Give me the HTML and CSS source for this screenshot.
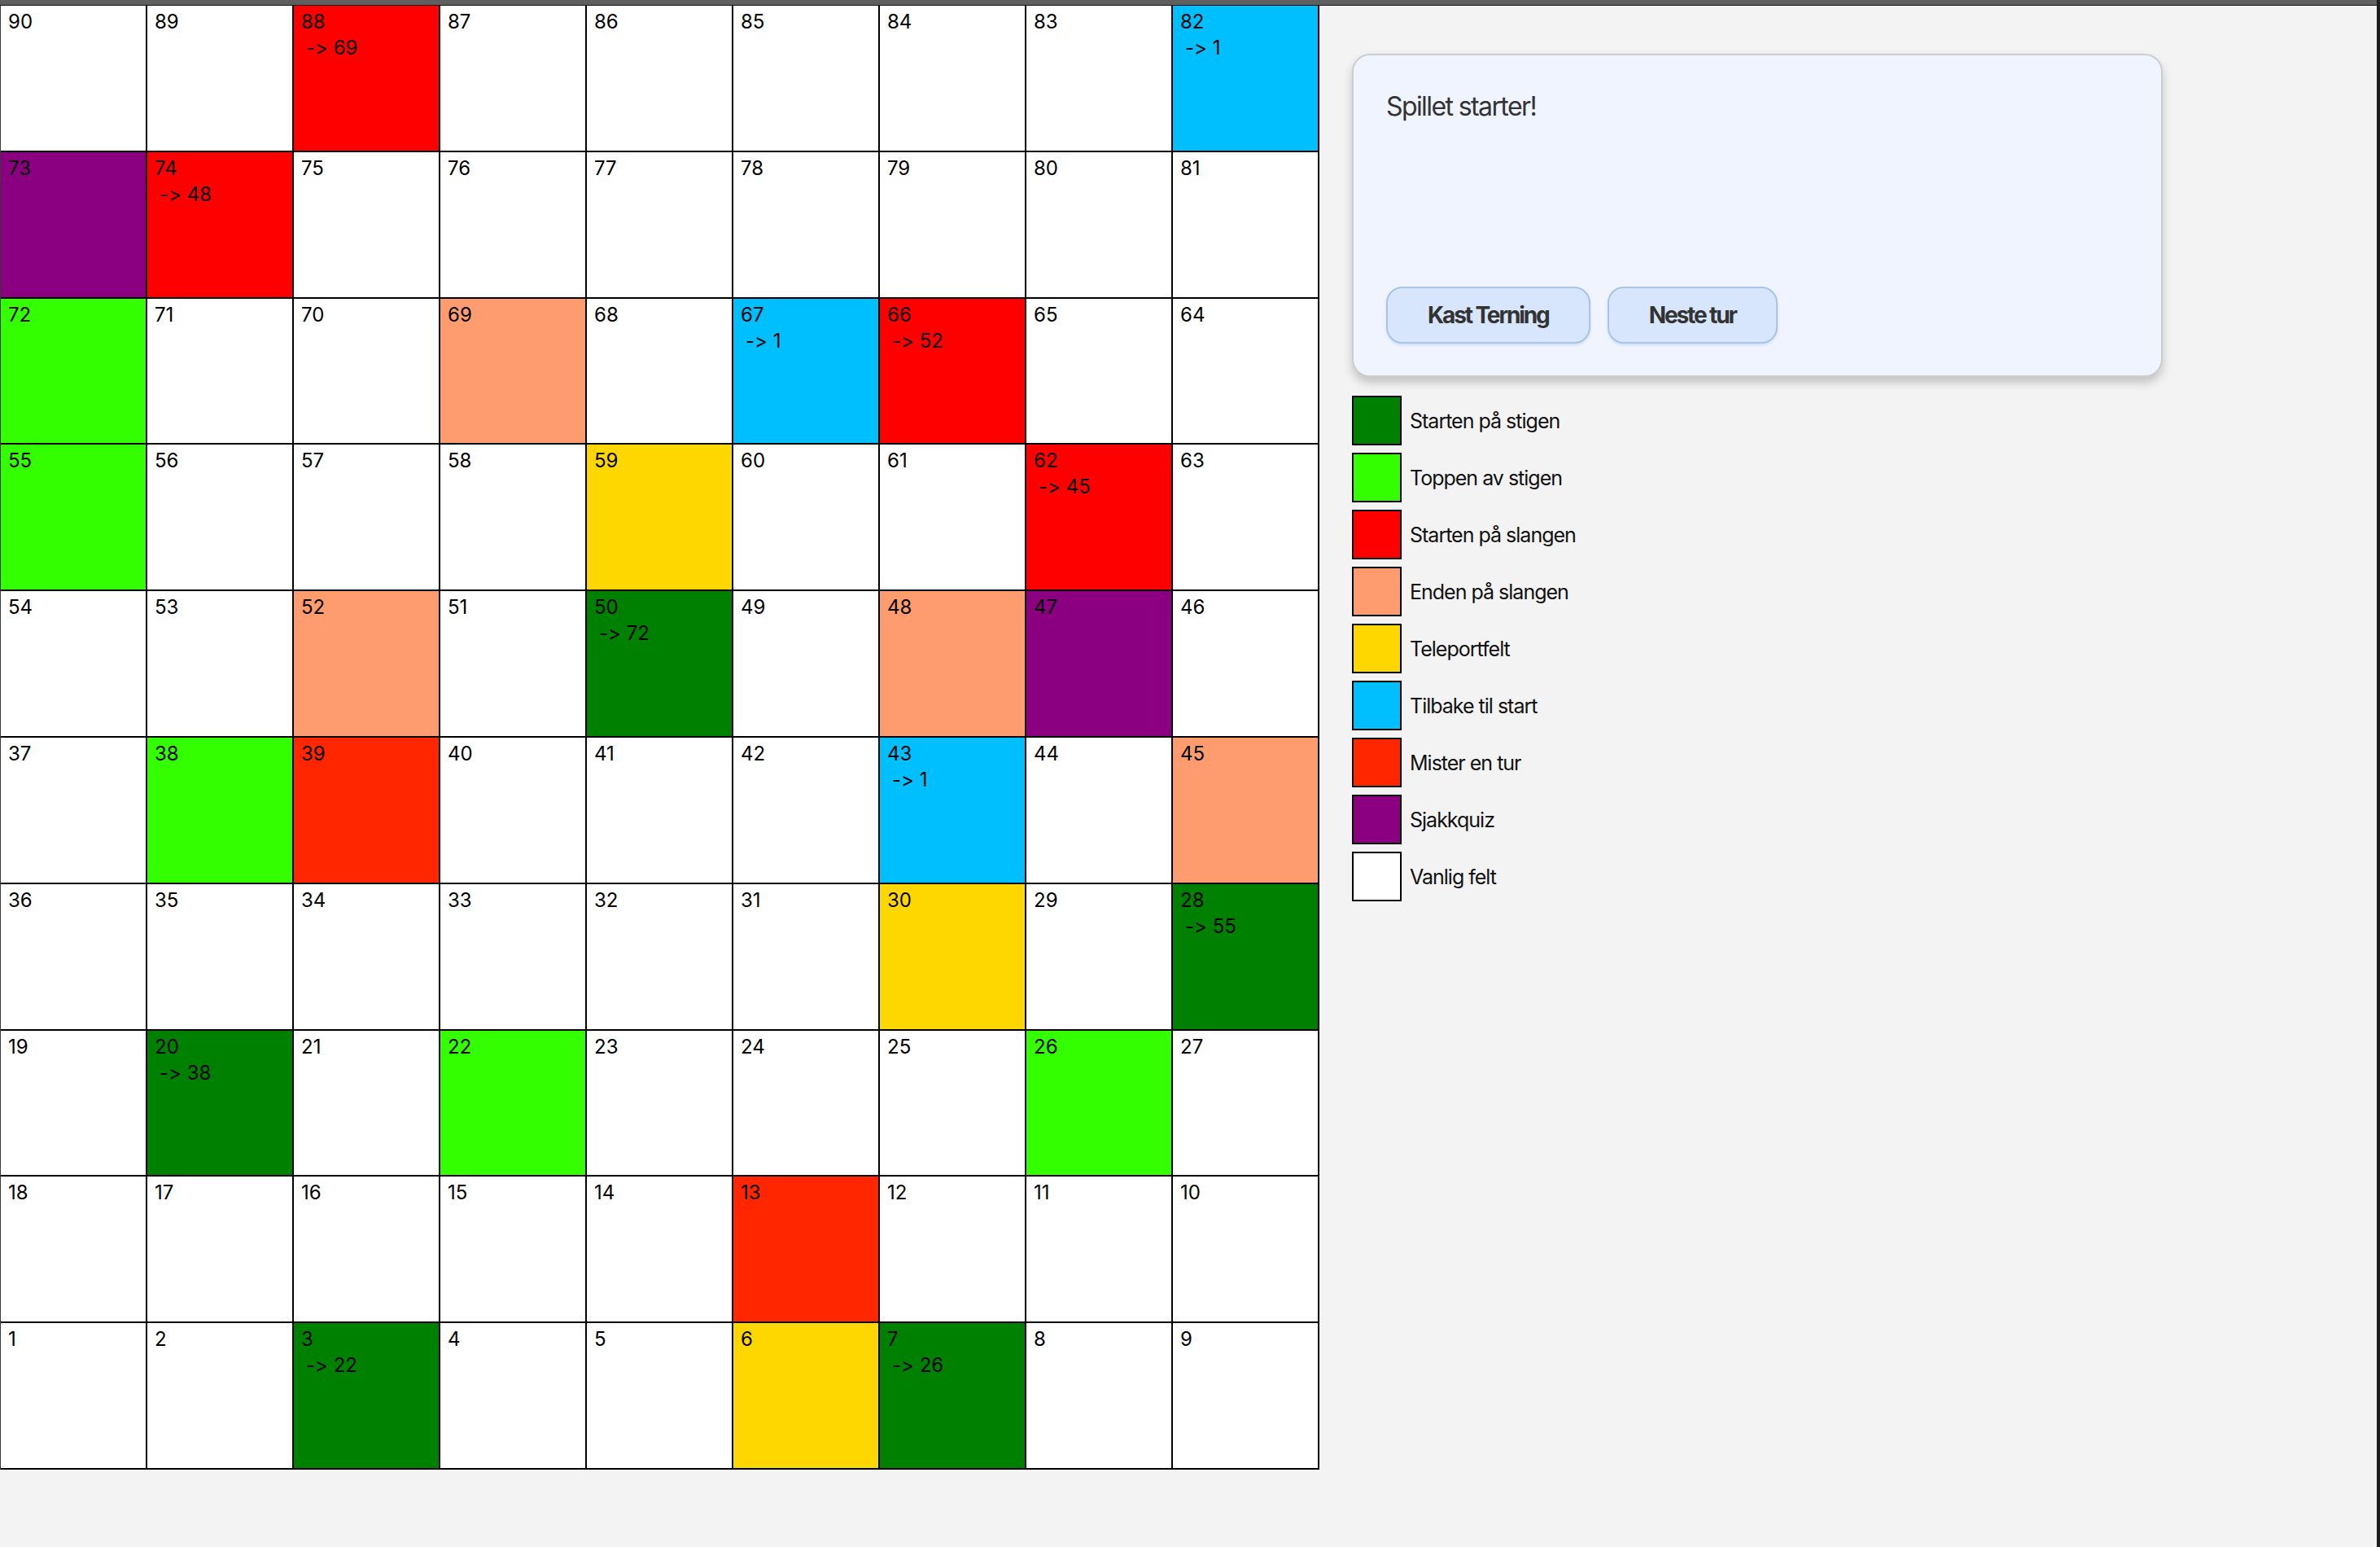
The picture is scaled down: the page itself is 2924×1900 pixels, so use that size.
FILE: index.html
```html
<!DOCTYPE html>
<html lang="no">
<head>
<meta charset="utf-8">
<title>Stigespill</title>
<link rel="stylesheet" href="styles.css">
</head>
<body>
<div class="window">
  <div class="titlebar"></div>
  <main class="app">
    <div class="board">
      <div class="cell">90</div>
      <div class="cell">89</div>
      <div class="cell c-ss">88<span class="to">-&gt; 69</span></div>
      <div class="cell">87</div>
      <div class="cell">86</div>
      <div class="cell">85</div>
      <div class="cell">84</div>
      <div class="cell">83</div>
      <div class="cell c-bs">82<span class="to">-&gt; 1</span></div>

      <div class="cell c-q">73</div>
      <div class="cell c-ss">74<span class="to">-&gt; 48</span></div>
      <div class="cell">75</div>
      <div class="cell">76</div>
      <div class="cell">77</div>
      <div class="cell">78</div>
      <div class="cell">79</div>
      <div class="cell">80</div>
      <div class="cell">81</div>

      <div class="cell c-lt">72</div>
      <div class="cell">71</div>
      <div class="cell">70</div>
      <div class="cell c-se">69</div>
      <div class="cell">68</div>
      <div class="cell c-bs">67<span class="to">-&gt; 1</span></div>
      <div class="cell c-ss">66<span class="to">-&gt; 52</span></div>
      <div class="cell">65</div>
      <div class="cell">64</div>

      <div class="cell c-lt">55</div>
      <div class="cell">56</div>
      <div class="cell">57</div>
      <div class="cell">58</div>
      <div class="cell c-tp">59</div>
      <div class="cell">60</div>
      <div class="cell">61</div>
      <div class="cell c-ss">62<span class="to">-&gt; 45</span></div>
      <div class="cell">63</div>

      <div class="cell">54</div>
      <div class="cell">53</div>
      <div class="cell c-se">52</div>
      <div class="cell">51</div>
      <div class="cell c-ls">50<span class="to">-&gt; 72</span></div>
      <div class="cell">49</div>
      <div class="cell c-se">48</div>
      <div class="cell c-q">47</div>
      <div class="cell">46</div>

      <div class="cell">37</div>
      <div class="cell c-lt">38</div>
      <div class="cell c-mt">39</div>
      <div class="cell">40</div>
      <div class="cell">41</div>
      <div class="cell">42</div>
      <div class="cell c-bs">43<span class="to">-&gt; 1</span></div>
      <div class="cell">44</div>
      <div class="cell c-se">45</div>

      <div class="cell">36</div>
      <div class="cell">35</div>
      <div class="cell">34</div>
      <div class="cell">33</div>
      <div class="cell">32</div>
      <div class="cell">31</div>
      <div class="cell c-tp">30</div>
      <div class="cell">29</div>
      <div class="cell c-ls">28<span class="to">-&gt; 55</span></div>

      <div class="cell">19</div>
      <div class="cell c-ls">20<span class="to">-&gt; 38</span></div>
      <div class="cell">21</div>
      <div class="cell c-lt">22</div>
      <div class="cell">23</div>
      <div class="cell">24</div>
      <div class="cell">25</div>
      <div class="cell c-lt">26</div>
      <div class="cell">27</div>

      <div class="cell">18</div>
      <div class="cell">17</div>
      <div class="cell">16</div>
      <div class="cell">15</div>
      <div class="cell">14</div>
      <div class="cell c-mt">13</div>
      <div class="cell">12</div>
      <div class="cell">11</div>
      <div class="cell">10</div>

      <div class="cell">1</div>
      <div class="cell">2</div>
      <div class="cell c-ls">3<span class="to">-&gt; 22</span></div>
      <div class="cell">4</div>
      <div class="cell">5</div>
      <div class="cell c-tp">6</div>
      <div class="cell c-ls">7<span class="to">-&gt; 26</span></div>
      <div class="cell">8</div>
      <div class="cell">9</div>
    </div>

    <aside class="sidebar">
      <section class="panel">
        <p class="message">Spillet starter!</p>
        <div class="actions">
          <button class="btn" type="button">Kast Terning</button>
          <button class="btn" type="button">Neste tur</button>
        </div>
      </section>

      <ul class="legend">
        <li class="legend-item"><span class="swatch c-ls"></span><span class="label">Starten på stigen</span></li>
        <li class="legend-item"><span class="swatch c-lt"></span><span class="label">Toppen av stigen</span></li>
        <li class="legend-item"><span class="swatch c-ss"></span><span class="label">Starten på slangen</span></li>
        <li class="legend-item"><span class="swatch c-se"></span><span class="label">Enden på slangen</span></li>
        <li class="legend-item"><span class="swatch c-tp"></span><span class="label">Teleportfelt</span></li>
        <li class="legend-item"><span class="swatch c-bs"></span><span class="label">Tilbake til start</span></li>
        <li class="legend-item"><span class="swatch c-mt"></span><span class="label">Mister en tur</span></li>
        <li class="legend-item"><span class="swatch c-q"></span><span class="label">Sjakkquiz</span></li>
        <li class="legend-item"><span class="swatch c-plain"></span><span class="label">Vanlig felt</span></li>
      </ul>
    </aside>
  </main>
</div>
</body>
</html>
```

FILE: styles.css
```css
html, body {
  margin: 0;
  padding: 0;
}

body {
  background: #f3f3f3;
  font-family: Inter, "Noto Sans", "Liberation Sans", sans-serif;
  font-feature-settings: "calt" 0, "liga" 0;
  font-variant-ligatures: none;
  color: #000;
}

.window {
  min-height: 1900px;
  box-sizing: border-box;
  border-right: 4px solid #1e1e1e;
  display: flex;
  flex-direction: column;
}

.titlebar {
  height: 6px;
  background: #5f5f5f;
  border-bottom: 1px solid #111;
}

.app {
  display: flex;
  align-items: flex-start;
}

.board {
  display: grid;
  grid-template-columns: repeat(9, 180px);
  grid-template-rows: repeat(10, 179.8px);
  border-left: 1px solid #3a3a3a;
}

.cell {
  box-sizing: border-box;
  background: #fff;
  border-right: 2px solid #000;
  border-bottom: 2px solid #000;
  padding: 4px 9px 0;
  font-size: 24px;
  line-height: 32px;
}

.to {
  display: block;
  padding-left: 6px;
}

.c-ls { background: #008000; }
.c-lt { background: #33ff00; }
.c-ss { background: #ff0000; }
.c-se { background: #ff9c6f; }
.c-tp { background: #ffd700; }
.c-bs { background: #00bfff; }
.c-mt { background: #ff2600; }
.c-q  { background: #8b0080; }
.c-plain { background: #fff; }

.sidebar {
  margin: 59px 0 0 40px;
  display: flex;
  flex-direction: column;
}

.panel {
  box-sizing: border-box;
  width: 996px;
  padding: 40px 40px 39px;
  background: #eff4ff;
  border: 2px solid #cdcdcd;
  border-radius: 22px;
  box-shadow: 0 7px 12px rgba(0, 0, 0, 0.2);
}

.message {
  margin: 0;
  height: 241px;
  padding-top: 3px;
  font-size: 32px;
  line-height: 40px;
  color: #333;
  letter-spacing: -1.6px;
}

.actions {
  display: flex;
  gap: 21px;
}

.btn {
  height: 70px;
  padding: 0 49px;
  background: #d7e6fc;
  border: 2px solid #a9c4e4;
  border-radius: 20px;
  font-family: Inter, "Noto Sans", "Liberation Sans", sans-serif;
  font-feature-settings: "calt" 0, "liga" 0;
  font-weight: 700;
  font-size: 28px;
  letter-spacing: -2.1px;
  color: #333;
  box-shadow: 0 2px 3px rgba(110, 160, 225, 0.25);
}

.legend {
  list-style: none;
  margin: 23px 0 0;
  padding: 0;
  display: flex;
  flex-direction: column;
  gap: 9px;
}

.legend-item {
  display: flex;
  align-items: center;
}

.swatch {
  box-sizing: border-box;
  width: 61px;
  height: 61px;
  border: 2px solid #000;
}

.label {
  margin-left: 10px;
  font-size: 25px;
  color: #111;
  letter-spacing: -1px;
}
```
